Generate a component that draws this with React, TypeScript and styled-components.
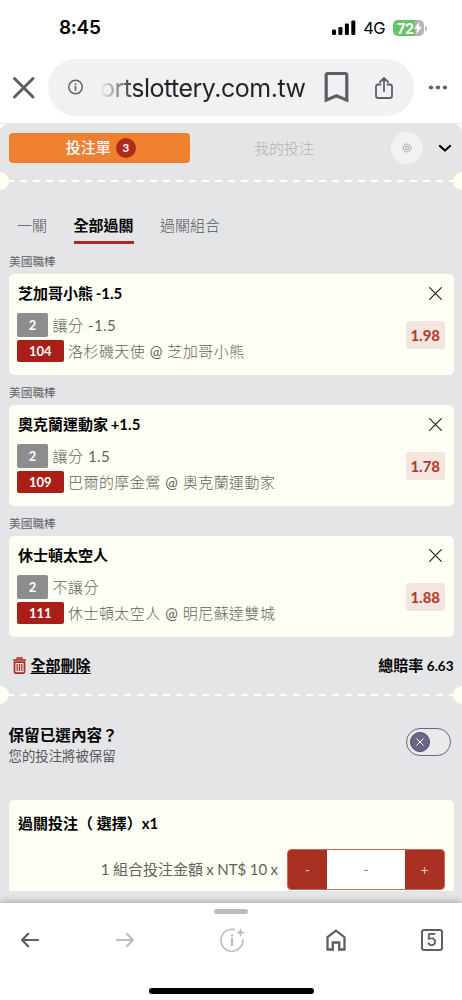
import React from 'react';
import styled, { createGlobalStyle } from 'styled-components';

const Global = createGlobalStyle`
  *, *::before, *::after { box-sizing: border-box; }
  body { margin: 0; background: #fff; font-family: Lato, "Noto Sans CJK TC", sans-serif; overflow: hidden; }
  button { font: inherit; border: 0; padding: 0; margin: 0; background: none; color: inherit; display: flex; align-items: center; justify-content: center; }
  svg { display: block; flex: none; }
`;

const Screen = styled.div`
  width: 462px; height: 1000px; display: flex; flex-direction: column; background: #fff; overflow: hidden;
`;

/* ---------- phone status bar ---------- */
const StatusBar = styled.div`
  height: 59px; flex: none; display: flex; align-items: flex-start; justify-content: space-between;
  padding: 16px 35px 0 59px; font-family: Inter, sans-serif; color: #000;
`;
const Clock = styled.div`font-size: 19px; font-weight: 600; line-height: 24px; letter-spacing: -0.3px;`;
const StatusIcons = styled.div`display: flex; align-items: center; height: 24px;`;
const Network = styled.span`font-size: 16.5px; line-height: 24px; margin: 0 8px 0 7px; letter-spacing: -0.6px;`;
const Battery = styled.div`
  width: 31px; height: 16px; border-radius: 5px; display: flex; align-items: center; padding-left: 4px;
  background: linear-gradient(90deg, #65c466 22px, #b4b4b4 22px); color: #fff; font-size: 14.5px; font-weight: 700; letter-spacing: -0.5px;
`;
const BatteryCap = styled.div`width: 2px; height: 5px; margin-left: 1px; border-radius: 0 2px 2px 0; background: #b4b4b4;`;

/* ---------- browser address bar ---------- */
const AddressRow = styled.div`
  height: 65px; flex: none; display: flex; align-items: flex-start; padding: 0 14px 0 12px; border-bottom: 1px solid #e8e8e8;
`;
const CloseTab = styled.button`width: 24px; height: 57px; margin-right: 12px;`;
const AddressPill = styled.div`
  width: 366px; height: 56.5px; border-radius: 28px; background: #f0f1f3; display: flex; align-items: center; padding-left: 20px;
`;
const Url = styled.div`
  width: 207px; margin: 0 17px 0 16px; font-family: Inter, sans-serif; font-size: 25px; line-height: 34px; letter-spacing: -0.5px;
  padding-top: 1px;
  white-space: nowrap; background: linear-gradient(90deg, #f0f1f3 0, #222326 36px); background-clip: text; -webkit-text-fill-color: transparent;
`;
const ShareButton = styled.button`margin: 1px 0 0 26px;`;
const MoreButton = styled.button`height: 57px; margin-left: 14px;`;

/* ---------- bet slip ---------- */
const Panel = styled.main`
  height: 779px; flex: none; background: #e4e5e7; border-radius: 8px 8px 0 0; display: flex; flex-direction: column; overflow: hidden;
`;
const SlipTabs = styled.div`height: 48px; flex: none; display: flex; align-items: center; padding: 0 8.5px;`;
const ActiveSlip = styled.button`
  width: 181.5px; height: 30px; border-radius: 4px; background: #ee8030; color: #fff; font-size: 15px; line-height: 28px; font-weight: 500; gap: 5px;
  padding: 0 0 2px 3px;
`;
const CountBadge = styled.span`
  width: 20px; height: 20px; border-radius: 50%; background: #ad2b1b; font-size: 11.5px; line-height: 20px; font-weight: 700; text-align: center;
  margin-top: 2px;
`;
const MyBets = styled.button`width: 188px; height: 30px; padding-bottom: 2px; font-size: 15px; color: #b2b3b5; font-weight: 300;`;
const RoundButton = styled.button`width: 32px; height: 32px; border-radius: 50%; background: #f1f2f4; margin: 0 15px 0 13px;`;

const Perforation = styled.div`
  height: 18px; flex: none; display: flex; align-items: center; justify-content: space-between;
`;
const Notch = styled.div<{ $side: 'left' | 'right' }>`
  width: 9px; height: 18px; background: #fffff0;
  border-radius: ${p => (p.$side === 'left' ? '0 9px 9px 0' : '9px 0 0 9px')};
`;
const Dashes = styled.div`
  flex: 1; height: 2px; background: repeating-linear-gradient(90deg, #fff 0 5px, transparent 5px 11px, #fff 11px 13px);
`;

const Modes = styled.nav`height: 54px; flex: none; display: flex; align-items: flex-end; gap: 26.5px; padding-left: 17px;`;
const Mode = styled.button<{ $active?: boolean }>`
  height: 34px; align-items: flex-start; font-size: 15px; line-height: 30px; white-space: nowrap;
  font-weight: ${p => (p.$active ? 700 : 300)}; color: ${p => (p.$active ? '#000' : '#55565a')};
  border-bottom: 3px solid ${p => (p.$active ? '#ad2b2b' : 'transparent')};
`;

const League = styled.div`
  height: 30px; flex: none; padding: 7px 9px 0; font-size: 11.7px; line-height: 20px; color: #606165; font-weight: 400;
`;
const BetCard = styled.article`
  height: 101px; flex: none; margin: 0 8.5px; border-radius: 5px; background: #fffff5; padding: 7px 9px 0 8.5px; display: flex; justify-content: space-between;
`;
const BetInfo = styled.div`display: flex; flex-direction: column;`;
const BetTitle = styled.h3`
  margin: 0 0 8px; padding-left: 1px; font-size: 15px; line-height: 24px; font-weight: 700; color: #000; height: 24px; white-space: nowrap; word-spacing: -1px;
`;
const BetLine = styled.div<{ $gap: number }>`
  display: flex; align-items: center; height: 24px; margin-bottom: ${p => p.$gap}px; font-size: 15px; line-height: 24px;
  letter-spacing: 0.45px; color: #62635c; white-space: nowrap; font-weight: 300;
`;
const LatinText = styled.span`font-weight: 400;`;
const Tag = styled.span<{ $red?: boolean }>`
  width: ${p => (p.$red ? 46.5 : 31)}px; height: ${p => (p.$red ? 22 : 24)}px; margin-right: 4.5px; border-radius: 2px;
  background: ${p => (p.$red ? '#aa1e18' : '#8d8d8d')}; color: #fff; font-size: 13px; line-height: ${p => (p.$red ? 22 : 24)}px;
  font-weight: 700; text-align: center; letter-spacing: 0;
`;
const BetSide = styled.div`display: flex; flex-direction: column; align-items: flex-end;`;
const RemoveBet = styled.button`width: 18px; height: 25px; margin-bottom: 15px;`;
const Odds = styled.div`
  width: 38.5px; height: 28px; border-radius: 3px; background: #f4e5de; color: #b0382b; font-size: 15px; line-height: 28px; font-weight: 700; text-align: center;
`;

const Summary = styled.div`
  height: 49px; flex: none; display: flex; align-items: center; justify-content: space-between; padding: 7px 8.5px 0 12.5px;
`;
const DeleteAll = styled.button`gap: 5px; font-size: 15px; line-height: 24px; font-weight: 700; color: #000;`;
const DeleteLabel = styled.span`text-decoration: underline; text-underline-offset: 2px; text-decoration-thickness: 1px;`;
const Total = styled.div`font-size: 15px; line-height: 24px; font-weight: 700; color: #000;`;
const TotalValue = styled.span`font-size: 13.5px;`;

const KeepRow = styled.div`height: 96px; flex: none; display: flex; justify-content: space-between; padding: 19px 11px 0 8.5px;`;
const KeepTitle = styled.div`font-size: 15.6px; line-height: 24px; font-weight: 700; color: #000;`;
const KeepNote = styled.div`font-size: 13.4px; line-height: 18px; color: #55565a; font-weight: 400;`;
const Toggle = styled.button`
  width: 45px; height: 28px; margin-top: 5px; border-radius: 14px; border: 1px solid #68647f; justify-content: flex-start; padding-left: 3px; background: #e9eaec;
`;
const Knob = styled.span`
  width: 20px; height: 20px; border-radius: 50%; background: #6b6688; border: 1px solid #4f4b65; display: flex; align-items: center; justify-content: center;
`;

const StakeCard = styled.section`
  height: 91px; flex: none; margin: 0 8.5px; padding: 11px 8.5px 0; border-radius: 5px 5px 0 0; background: #fffff5;
`;
const StakeTitle = styled.h3`margin: 0 0 14px; padding-left: 1px; font-size: 15px; line-height: 24px; height: 24px; font-weight: 700; color: #000; white-space: pre;`;
const StakeLine = styled.div`display: flex; justify-content: flex-end; align-items: center; gap: 9px;`;
const StakeLabel = styled.span`
  font-size: 15px; line-height: 24px; color: #62635c; font-weight: 400; white-space: nowrap; word-spacing: -0.4px; padding-bottom: 2px;
`;
const Stepper = styled.div`
  width: 158px; height: 41px; border: 1px solid #c26a60; border-radius: 4px; overflow: hidden; display: flex; background: #fff;
`;
const StepButton = styled.button`width: 39px; height: 39px; background: #a93124; color: #f1cfc9; font-size: 13px; font-weight: 400;`;
const StepValue = styled.div`flex: 1; text-align: center; font-size: 13px; line-height: 40px; color: #777;`;

/* ---------- browser toolbar ---------- */
const Toolbar = styled.footer`
  height: 97px; flex: none; position: relative; display: flex; flex-direction: column; align-items: center; background: #fff;
  box-shadow: 0 -1px 7px rgba(0, 0, 0, 0.3); padding-top: 6px;
`;
const Grabber = styled.div`width: 34px; height: 5px; border-radius: 3px; background: #bcbdbf; flex: none;`;
const ToolRow = styled.div`
  width: 100%; height: 52px; display: grid; grid-template-columns: 60px 130px 84px 124px 64px; align-items: center; justify-items: center;
`;
const ToolButton = styled.button<{ $w: number; $shift?: number }>`width: ${p => p.$w}px; height: 26px; margin-left: ${p => p.$shift ?? 0}px;`;
const TabCount = styled.div`
  width: 22px; height: 22px; border: 2px solid #5d5f63; border-radius: 3px; color: #5d5f63; font: 500 17px/18px Inter, sans-serif; text-align: center;
`;
const HomeIndicator = styled.div`width: 165px; height: 6px; margin-top: 22px; border-radius: 3px; background: #000;`;

const bets = [
  { name: '芝加哥小熊', line: '-1.5', market: '讓分', value: '-1.5', code: '104', away: '洛杉磯天使', home: '芝加哥小熊', odds: '1.98' },
  { name: '奧克蘭運動家', line: '+1.5', market: '讓分', value: '1.5', code: '109', away: '巴爾的摩金鶯', home: '奧克蘭運動家', odds: '1.78' },
  { name: '休士頓太空人', line: '', market: '不讓分', value: '', code: '111', away: '休士頓太空人', home: '明尼蘇達雙城', odds: '1.88' },
];

const Divider = () => (
  <Perforation><Notch $side="left" /><Dashes /><Notch $side="right" /></Perforation>
);

const Arrow = ({ color, flip }: { color: string; flip?: boolean }) => (
  <svg width="20" height="20" viewBox="0 0 20 20" fill="none" stroke={color} strokeWidth="2.2" strokeLinecap="round" strokeLinejoin="round" transform={flip ? 'scale(-1,1)' : undefined}>
    <path d="M18 10H2M8.2 3.7 2 10l6.2 6.3" />
  </svg>
);

export default function App() {
  return (
    <Screen>
      <Global />
      <StatusBar>
        <Clock>8:45</Clock>
        <StatusIcons>
          <svg width="25" height="16" viewBox="0 0 25 16">
            <rect x="1" y="9.5" width="4" height="5.5" rx="1.2" />
            <rect x="7.4" y="7" width="4" height="8" rx="1.2" />
            <rect x="13.9" y="3.5" width="4" height="11.5" rx="1.2" />
            <rect x="20.3" y="0.5" width="4" height="14.5" rx="1.2" />
          </svg>
          <Network>4G</Network>
          <Battery>72
            <svg width="8" height="12" viewBox="0 0 8 12"><path d="M5.2 0 0 6.8h3L2.4 12 8 4.8H4.8z" fill="#fff" /></svg>
          </Battery>
          <BatteryCap />
        </StatusIcons>
      </StatusBar>

      <AddressRow>
        <CloseTab aria-label="close">
          <svg width="24" height="24" viewBox="0 0 24 24" stroke="#5d5f63" strokeWidth="3" strokeLinecap="round"><path d="m2.5 2.5 18.5 18.5m0-18.5-18.5 18.5" /></svg>
        </CloseTab>
        <AddressPill>
          <svg width="16" height="16" viewBox="0 0 16 16" fill="none" stroke="#5d5f63" strokeWidth="1.4">
            <circle cx="7.5" cy="8" r="6.8" /><path d="M7.5 7v4.7M7.5 4.3V6" strokeWidth="1.6" />
          </svg>
          <Url>ortslottery.com.tw</Url>
          <svg width="25" height="32" viewBox="0 0 25 32" fill="none" stroke="#5d5f63" strokeWidth="3.2">
            <path d="M2.2 4Q2.2 2.500 3.700 2.500h17.600q1.500 0 1.500 1.500v25.200L12.500 24.800 2.200 29.200z" />
          </svg>
          <ShareButton aria-label="share">
            <svg width="18" height="22" viewBox="0 0 18 22" fill="none" stroke="#5d5f63" strokeWidth="1.8" strokeLinecap="round" strokeLinejoin="round">
              <path d="M5.5 7.5H3Q1 7.5 1 9.5V19q0 2 2 2h12q2 0 2-2V9.5q0-2-2-2h-2.5M9 14V1.3M5 5l4-4 4 4" />
            </svg>
          </ShareButton>
        </AddressPill>
        <MoreButton aria-label="more">
          <svg width="20" height="6" viewBox="0 0 20 6" fill="#5d5f63"><circle cx="3" cy="2.5" r="2.1" /><circle cx="10" cy="2.5" r="2.1" /><circle cx="17" cy="2.5" r="2.1" /></svg>
        </MoreButton>
      </AddressRow>

      <Panel>
        <SlipTabs>
          <ActiveSlip>投注單<CountBadge>3</CountBadge></ActiveSlip>
          <MyBets>我的投注</MyBets>
          <RoundButton aria-label="settings">
            <svg width="10" height="10" viewBox="0 0 10 10" fill="none" stroke="#b0b1b4" strokeWidth="1.2">
              <circle cx="5" cy="5" r="3.9" strokeDasharray="2 .5" /><circle cx="5" cy="5" r="1.7" />
            </svg>
          </RoundButton>
          <svg width="14" height="8" viewBox="0 0 14 8" fill="none" stroke="#000" strokeWidth="2.3" strokeLinecap="round" strokeLinejoin="round"><path d="m2 2 5 4.500 5-4.500" /></svg>
        </SlipTabs>
        <Divider />
        <Modes>
          <Mode>一關</Mode>
          <Mode $active>全部過關</Mode>
          <Mode>過關組合</Mode>
        </Modes>

        {bets.map(bet => (
          <React.Fragment key={bet.code}>
            <League>美國職棒</League>
            <BetCard>
              <BetInfo>
                <BetTitle>{bet.name} {bet.line}</BetTitle>
                <BetLine $gap={2}><Tag>2</Tag>{bet.market}&nbsp;<LatinText>{bet.value}</LatinText></BetLine>
                <BetLine $gap={0}><Tag $red>{bet.code}</Tag>{bet.away}&nbsp;<LatinText>@</LatinText>&nbsp;{bet.home}</BetLine>
              </BetInfo>
              <BetSide>
                <RemoveBet aria-label="remove">
                  <svg width="13" height="13" viewBox="0 0 13 13" stroke="#222" strokeWidth="1.2" strokeLinecap="round"><path d="m.7.7 11.6 11.6m0-11.6L.7 12.3" /></svg>
                </RemoveBet>
                <Odds>{bet.odds}</Odds>
              </BetSide>
            </BetCard>
          </React.Fragment>
        ))}

        <Summary>
          <DeleteAll>
            <svg width="13" height="17" viewBox="0 0 13 17" fill="none" stroke="#ad2b20">
              <path d="M0 3h13M4.2 3V1h4.6v2" strokeWidth="1.4" />
              <path d="M1.5 5.2v9.5q0 1.5 1.5 1.5h7q1.5 0 1.5-1.5V5.2z" strokeWidth="1.7" />
              <path d="M4.2 7v7M6.5 7v7M8.8 7v7" strokeWidth="1.2" />
            </svg>
            <DeleteLabel>全部刪除</DeleteLabel>
          </DeleteAll>
          <Total>總賠率 <TotalValue>6.63</TotalValue></Total>
        </Summary>
        <Divider />

        <KeepRow>
          <div>
            <KeepTitle>保留已選內容？</KeepTitle>
            <KeepNote>您的投注將被保留</KeepNote>
          </div>
          <Toggle aria-label="keep">
            <Knob><svg width="8" height="8" viewBox="0 0 8 8" stroke="#fff" strokeWidth="1"><path d="m.5.5 7 7m0-7-7 7" /></svg></Knob>
          </Toggle>
        </KeepRow>

        <StakeCard>
          <StakeTitle>過關投注（ 選擇）x1</StakeTitle>
          <StakeLine>
            <StakeLabel>1 組合投注金額 x NT$ 10 x</StakeLabel>
            <Stepper>
              <StepButton>-</StepButton>
              <StepValue>-</StepValue>
              <StepButton>+</StepButton>
            </Stepper>
          </StakeLine>
        </StakeCard>
      </Panel>

      <Toolbar>
        <Grabber />
        <ToolRow>
          <ToolButton $w={20} aria-label="back"><Arrow color="#5d5f63" /></ToolButton>
          <ToolButton $w={20} aria-label="forward"><Arrow color="#bcbdbf" flip /></ToolButton>
          <ToolButton $w={26} aria-label="page info">
            <svg width="26" height="26" viewBox="0 0 26 26" fill="none" stroke="#bcbdbf" strokeWidth="1.7">
              <path d="M15.5 2.6A11 11 0 1 0 23.9 13" strokeLinecap="round" />
              <path d="M13 11v8M13 7.2v2.2" strokeWidth="2.3" />
              <path d="m21.5 1 1.2 3.3L26 5.5l-3.3 1.2-1.2 3.3-1.2-3.3L17 5.5l3.300-1.200z" fill="#bcbdbf" stroke="none" />
            </svg>
          </ToolButton>
          <ToolButton $w={20} aria-label="home">
            <svg width="20" height="22" viewBox="0 0 20 22" fill="none" stroke="#5d5f63" strokeWidth="2.3">
              <path d="M1.5 8.2 10 1.6l8.5 6.6v12.3h-5.3v-7H6.800v7H1.500z" />
            </svg>
          </ToolButton>
          <ToolButton $w={22} $shift={3} aria-label="tabs"><TabCount>5</TabCount></ToolButton>
        </ToolRow>
        <HomeIndicator />
      </Toolbar>
    </Screen>
  );
}
